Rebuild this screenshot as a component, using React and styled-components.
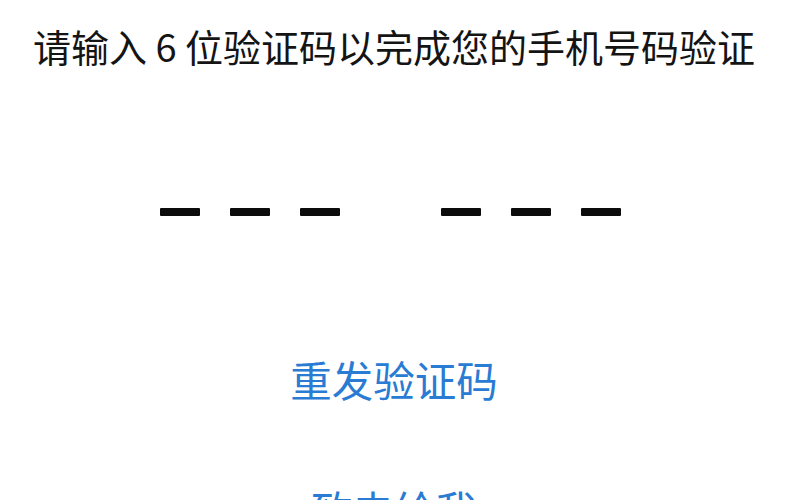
import React from "react";
import styled, { createGlobalStyle } from "styled-components";

const GlobalStyle = createGlobalStyle`
  html, body {
    margin: 0;
    padding: 0;
    background: #ffffff;
    overflow: hidden;
  }
  body {
    font-family: "Noto Sans CJK SC", "Noto Sans", sans-serif;
  }
`;

const Screen = styled.div`
  width: 800px;
  height: 500px;
  display: flex;
  flex-direction: column;
  align-items: center;
  padding-right: 12px;
  box-sizing: border-box;
  overflow: hidden;
`;

const Title = styled.h1`
  margin: 19px 0 0;
  font-size: 38px;
  font-weight: 400;
  line-height: 54px;
  color: #141414;
  white-space: nowrap;
`;

const CodeRow = styled.div`
  display: flex;
  gap: 101px;
  margin: 135px 8px 0 0;
`;

const CodeGroup = styled.div`
  display: flex;
  gap: 30px;
`;

const Slot = styled.span`
  display: block;
  width: 40px;
  height: 8px;
  border-radius: 1px;
  background: #0c0c0c;
`;

const LinkButton = styled.button`
  border: 0;
  background: none;
  padding: 0;
  font-family: inherit;
  font-size: 41.5px;
  font-weight: 400;
  line-height: 58px;
  color: #2a7bd3;
  cursor: pointer;
  white-space: nowrap;
  margin-top: ${props => props.$gap}px;
`;

export default function App() {
  const groups = [[0, 1, 2], [3, 4, 5]];
  return (
    <>
      <GlobalStyle />
      <Screen>
        <Title>请输入 6 位验证码以完成您的手机号码验证</Title>
        <CodeRow>
          {groups.map((g, i) => (
            <CodeGroup key={i}>
              {g.map(n => (
                <Slot key={n} />
              ))}
            </CodeGroup>
          ))}
        </CodeRow>
        <LinkButton $gap={134}>重发验证码</LinkButton>
        <LinkButton $gap={72}>致电给我</LinkButton>
      </Screen>
    </>
  );
}
